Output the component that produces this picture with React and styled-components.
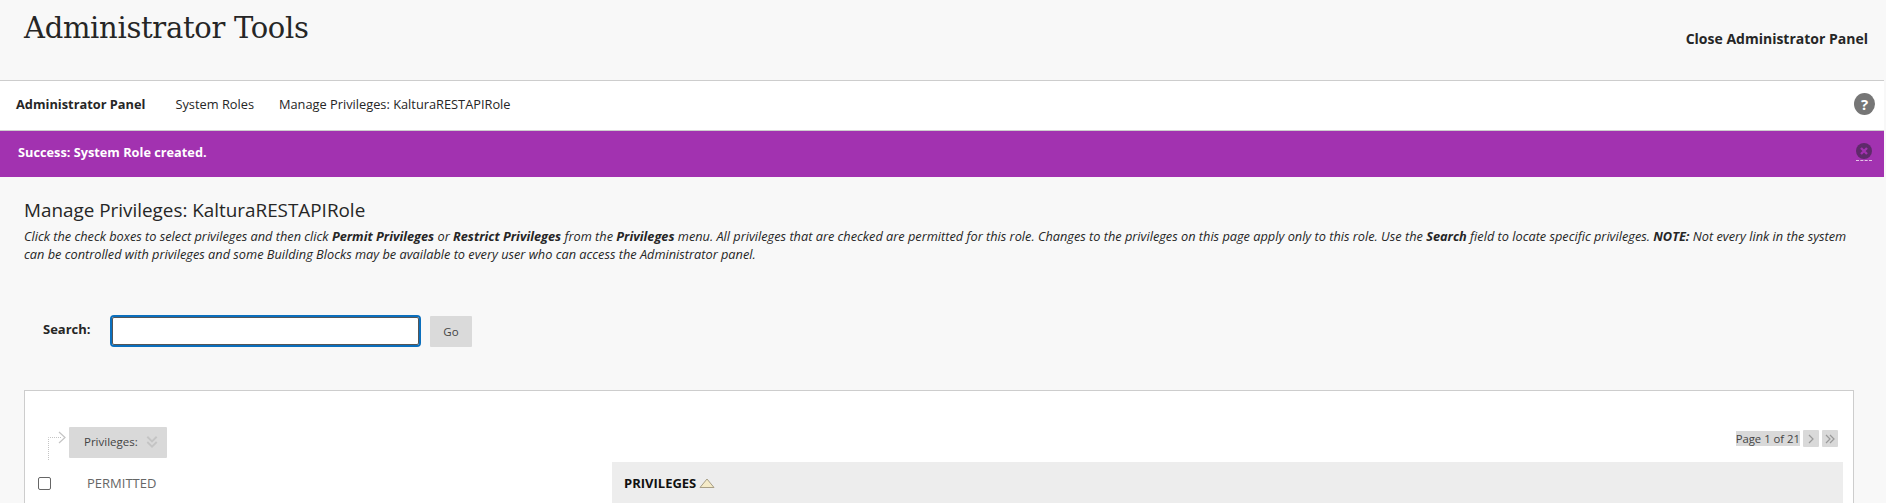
import React from 'react';
import styled, { createGlobalStyle } from 'styled-components';

const Global = createGlobalStyle`
  html, body {
    margin: 0;
    height: 503px;
    overflow: hidden;
    background: #f8f8f8;
    font-family: "Open Sans", "Noto Sans", sans-serif;
    color: #262626;
  }
`;

const Page = styled.div`
  width: 1884px;
  height: 503px;
  overflow: hidden;
`;

const Header = styled.header`
  height: 80px;
  box-sizing: border-box;
  display: flex;
  justify-content: space-between;
  padding: 8px 16px 0 24px;
`;

const Title = styled.h1`
  margin: 0;
  font-family: "DejaVu Serif", "Liberation Serif", serif;
  font-size: 29px;
  line-height: 40px;
  font-weight: 400;
  letter-spacing: -0.3px;
  color: #262626;
`;

const CloseLink = styled.a`
  margin-top: 21px;
  font-size: 14px;
  line-height: 20px;
  font-weight: 700;
  color: #262626;
`;

const Crumbs = styled.nav`
  height: 51px;
  box-sizing: border-box;
  background: #fff;
  border-top: 1px solid #cdcdcd;
  border-bottom: 1px solid #cdcdcd;
  display: flex;
  align-items: center;
  padding: 0 9px 3px 16px;
  font-size: 12.8px;
`;

const Crumb = styled.span`
  font-weight: ${p => (p.$strong ? 700 : 400)};
  margin-right: ${p => p.$gap}px;
  color: #262626;
`;

const HelpIcon = styled.span`
  margin-left: auto;
  width: 21px;
  height: 22px;
  border-radius: 50%;
  background: #767676;
  color: #fff;
  font-size: 15px;
  font-weight: 700;
  display: flex;
  align-items: center;
  justify-content: center;
`;

const Banner = styled.div`
  height: 46px;
  background: #a232b0;
  color: #fff;
  display: flex;
  align-items: center;
  justify-content: space-between;
  padding: 0 12px 5px 18px;
  box-sizing: border-box;
  font-size: 12.75px;
  font-weight: 700;
`;

const Dismiss = styled.span`
  display: flex;
  border-bottom: 1px dashed #e4c4e8;
  padding-bottom: 1px;
  margin-top: 1px;
`;

const Content = styled.main`
  padding: 20px 30px 0 24px;
`;

const Heading = styled.h2`
  margin: 0;
  font-size: 18.87px;
  line-height: 26px;
  font-weight: 400;
  color: #262626;
`;

const Help = styled.p`
  margin: 4px 0 0;
  font-size: 12.75px;
  line-height: 18px;
  font-style: italic;
  color: #262626;

  b {
    font-weight: 700;
  }
`;

const SearchRow = styled.form`
  display: flex;
  align-items: center;
  margin-top: 52px;
  padding-left: 19px;
`;

const SearchLabel = styled.label`
  width: 67px;
  font-size: 13px;
  font-weight: 700;
  margin-top: -5px;
`;

const SearchInput = styled.div`
  width: 307px;
  height: 28px;
  background: #fff;
  border: 2px solid #0b6fbd;
  border-radius: 4px;
  outline: 1px solid #555;
  outline-offset: -3px;
`;

const GoButton = styled.button`
  margin-left: 9px;
  width: 42px;
  height: 31px;
  border: 0;
  border-radius: 1px;
  background: #dadada;
  color: #444;
  font-family: inherit;
  font-size: 11.5px;
  padding: 0;
`;

const ListBox = styled.section`
  margin-top: 43px;
  background: #fff;
  border: 1px solid #cdcdcd;
  height: 200px;
  padding: 36px 10px 0 9px;
`;

const ActionBar = styled.div`
  display: flex;
  align-items: flex-start;
  height: 35px;
`;

const ArrowMark = styled.svg`
  width: 24px;
  height: 36px;
  margin-left: 10px;
`;

const ActionButton = styled.button`
  margin-left: 1px;
  height: 31px;
  width: 98px;
  border: 0;
  border-radius: 1px;
  background: #d9d9d9;
  color: #444;
  font-family: inherit;
  font-size: 11.5px;
  display: flex;
  align-items: center;
  gap: 7px;
  padding: 0 0 2px 15px;
`;

const Pager = styled.div`
  margin-left: auto;
  margin-right: 5px;
  margin-top: 3px;
  display: flex;
  align-items: flex-start;
  gap: 3px;
`;

const PageText = styled.span`
  background: #d9d9d9;
  margin-top: 1px;
  height: 15px;
  line-height: 15px;
  font-size: 11.3px;
  color: #444;
`;

const PageBtn = styled.span`
  width: 16px;
  height: 17px;
  background: #d9d9d9;
  border-radius: 1px;
  display: flex;
  align-items: center;
  justify-content: center;
`;

const TableHead = styled.div`
  display: grid;
  grid-template-columns: 578px 1fr;
  height: 42px;
`;

const PermittedCell = styled.div`
  display: flex;
  align-items: center;
  font-size: 13px;
  color: #666;
  gap: 36px;
  padding-left: 4px;
`;

const Check = styled.span`
  width: 11px;
  height: 11px;
  border: 1px solid #666;
  border-radius: 2px;
`;

const PrivCell = styled.div`
  background: #ededed;
  display: flex;
  align-items: center;
  padding-left: 12px;
  gap: 3px;
  font-size: 13px;
  font-weight: 700;
  color: #111;
`;

function Chevrons({ size = 14, color = '#c4c4c4' }) {
  return (
    <svg width={size} height={size} viewBox="0 0 12 12" fill="none" stroke={color} strokeWidth="1.6">
      <path d="M2 1.5l4 4 4-4M2 6l4 4 4-4" />
    </svg>
  );
}

export default function App() {
  return (
    <Page>
      <Global />
      <Header>
        <Title>Administrator Tools</Title>
        <CloseLink>Close Administrator Panel</CloseLink>
      </Header>
      <Crumbs>
        <Crumb $strong $gap={30}>Administrator Panel</Crumb>
        <Crumb $gap={25}>System Roles</Crumb>
        <Crumb $gap={0}>Manage Privileges: KalturaRESTAPIRole</Crumb>
        <HelpIcon>?</HelpIcon>
      </Crumbs>
      <Banner>
        <span>Success: System Role created.</span>
        <Dismiss>
          <svg width="16" height="16" viewBox="0 0 16 16">
            <circle cx="8" cy="8" r="8" fill="#5f2a6b" />
            <path d="M5 5l6 6M11 5l-6 6" stroke="#a232b0" strokeWidth="2.4" />
          </svg>
        </Dismiss>
      </Banner>
      <Content>
        <Heading>Manage Privileges: KalturaRESTAPIRole</Heading>
        <Help>
          Click the check boxes to select privileges and then click <b>Permit Privileges</b> or <b>Restrict Privileges</b> from the <b>Privileges</b> menu. All privileges that are checked are permitted for this role. Changes to the privileges on this page apply only to this role. Use the <b>Search</b> field to locate specific privileges. <b>NOTE:</b> Not every link in the system can be controlled with privileges and some Building Blocks may be available to every user who can access the Administrator panel.
        </Help>
        <SearchRow>
          <SearchLabel>Search:</SearchLabel>
          <SearchInput />
          <GoButton type="button">Go</GoButton>
        </SearchRow>
        <ListBox>
          <ActionBar>
            <ArrowMark viewBox="0 0 24 36" fill="none" stroke="#c4c4c4">
              <path d="M4.5 33V10.5H17" strokeDasharray="1 1" />
              <path d="M15 5l6 5.5-6 5.5" strokeWidth="1.2" />
            </ArrowMark>
            <ActionButton type="button">
              Privileges:
              <Chevrons />
            </ActionButton>
            <Pager>
              <PageText>Page 1 of 21</PageText>
              <PageBtn>
                <svg width="10" height="12" viewBox="0 0 10 12" fill="none" stroke="#999" strokeWidth="1.2"><path d="M3 2l4 4-4 4" /></svg>
              </PageBtn>
              <PageBtn>
                <svg width="12" height="12" viewBox="0 0 12 12" fill="none" stroke="#999" strokeWidth="1.2"><path d="M2 2l4 4-4 4M6 2l4 4-4 4" /></svg>
              </PageBtn>
            </Pager>
          </ActionBar>
          <TableHead>
            <PermittedCell>
              <Check />
              PERMITTED
            </PermittedCell>
            <PrivCell>
              PRIVILEGES
              <svg width="16" height="11" viewBox="0 0 16 11">
                <path d="M8 1l7 8.5H1z" fill="#f5ebc8" stroke="#a89f86" />
              </svg>
            </PrivCell>
          </TableHead>
        </ListBox>
      </Content>
    </Page>
  );
}
